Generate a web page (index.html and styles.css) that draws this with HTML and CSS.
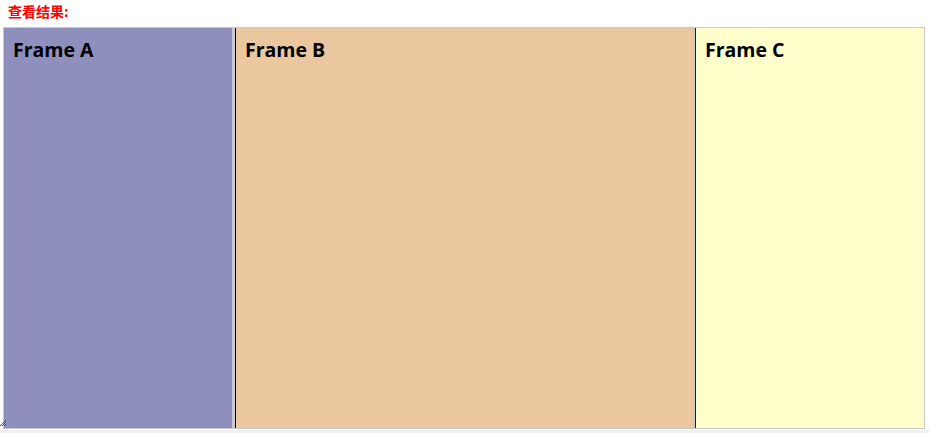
FILE: index.html
```html
<!DOCTYPE html>
<html lang="zh">
<head>
<meta charset="utf-8">
<title>Frames</title>
<link rel="stylesheet" href="styles.css">
</head>
<body>
<div class="title">查看结果:</div>
<div class="frameset">
  <div class="frame frame-a"><h3>Frame A</h3>
    <svg class="grip" width="7" height="8" viewBox="0 0 7 8"><path d="M0 7 L6 1 M2 7 L6 3 M4 7 L6 5" stroke="#555" stroke-width="1" fill="none"/></svg>
  </div>
  <div class="divider"></div>
  <div class="frame frame-b"><h3>Frame B</h3></div>
  <div class="divider narrow"></div>
  <div class="frame frame-c"><h3>Frame C</h3></div>
</div>
<div class="bottom"></div>
</body>
</html>
```
FILE: styles.css
```css
html, body {
  margin: 0;
  padding: 0;
  background: #fff;
}
body {
  width: 929px;
  height: 433px;
  overflow: hidden;
  position: relative;
}
.title {
  height: 27px;
  padding-left: 8px;
  box-sizing: border-box;
  padding-top: 2px;
  color: #ff0000;
  font-family: "Noto Sans CJK SC", "Noto Sans", sans-serif;
  font-weight: bold;
  font-size: 14px;
  line-height: 18px;
}
.frameset {
  margin-left: 3px;
  width: 922px;
  height: 402px;
  box-sizing: border-box;
  border: 1px solid #c8c8c8;
  display: flex;
}
.frame {
  height: 100%;
  position: relative;
  box-sizing: border-box;
}
.frame h3 {
  margin: 0;
  padding: 8px 0 0 9px;
  font-family: "Open Sans", "Noto Sans", sans-serif;
  font-weight: bold;
  font-size: 19.5px;
  line-height: 27px;
  color: #000;
}
.frame-a {
  width: 228px;
  background: #8f8fbd;
}
.frame-b {
  width: 458px;
  background: #eac79f;
  border-left: 1px solid #000;
}
.frame-c {
  flex: 1;
  background: #ffffcc;
  border-left: 1px solid #222;
}
.divider {
  width: 3px;
  background: #c8c8c8;
}
.divider.narrow {
  width: 2px;
}
.grip {
  position: absolute;
  left: -4px;
  bottom: 1px;
}
.bottom {
  height: 4px;
  margin-top: 1px;
  background: #f0f0f0;
}
```
